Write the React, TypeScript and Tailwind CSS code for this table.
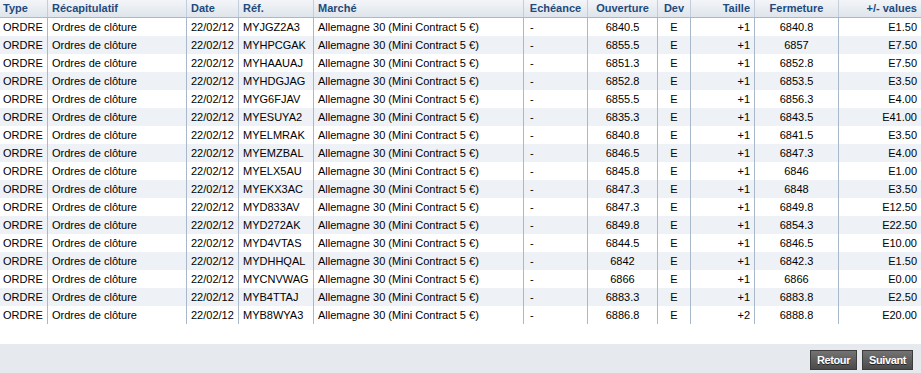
import React from 'react';

interface Trade {
  ref: string;
  open: string;
  size: string;
  close: string;
  pnl: string;
}

const trades: Trade[] = [
  { ref: 'MYJGZ2A3', open: '6840.5', size: '+1', close: '6840.8', pnl: 'E1.50' },
  { ref: 'MYHPCGAK', open: '6855.5', size: '+1', close: '6857', pnl: 'E7.50' },
  { ref: 'MYHAAUAJ', open: '6851.3', size: '+1', close: '6852.8', pnl: 'E7.50' },
  { ref: 'MYHDGJAG', open: '6852.8', size: '+1', close: '6853.5', pnl: 'E3.50' },
  { ref: 'MYG6FJAV', open: '6855.5', size: '+1', close: '6856.3', pnl: 'E4.00' },
  { ref: 'MYESUYA2', open: '6835.3', size: '+1', close: '6843.5', pnl: 'E41.00' },
  { ref: 'MYELMRAK', open: '6840.8', size: '+1', close: '6841.5', pnl: 'E3.50' },
  { ref: 'MYEMZBAL', open: '6846.5', size: '+1', close: '6847.3', pnl: 'E4.00' },
  { ref: 'MYELX5AU', open: '6845.8', size: '+1', close: '6846', pnl: 'E1.00' },
  { ref: 'MYEKX3AC', open: '6847.3', size: '+1', close: '6848', pnl: 'E3.50' },
  { ref: 'MYD833AV', open: '6847.3', size: '+1', close: '6849.8', pnl: 'E12.50' },
  { ref: 'MYD272AK', open: '6849.8', size: '+1', close: '6854.3', pnl: 'E22.50' },
  { ref: 'MYD4VTAS', open: '6844.5', size: '+1', close: '6846.5', pnl: 'E10.00' },
  { ref: 'MYDHHQAL', open: '6842', size: '+1', close: '6842.3', pnl: 'E1.50' },
  { ref: 'MYCNVWAG', open: '6866', size: '+1', close: '6866', pnl: 'E0.00' },
  { ref: 'MYB4TTAJ', open: '6883.3', size: '+1', close: '6883.8', pnl: 'E2.50' },
  { ref: 'MYB8WYA3', open: '6886.8', size: '+2', close: '6888.8', pnl: 'E20.00' },
];

const cols =
  'grid grid-cols-[47px_139px_52px_75px_210px_64px_70px_33px_64px_84px_1fr]';

const cell = 'border-l border-[#a9b9ca] px-1 whitespace-nowrap overflow-hidden';

const headers: { label: string; align: string }[] = [
  { label: 'Type', align: 'text-left' },
  { label: 'Récapitulatif', align: 'text-left' },
  { label: 'Date', align: 'text-left' },
  { label: 'Réf.', align: 'text-left' },
  { label: 'Marché', align: 'text-left' },
  { label: 'Echéance', align: 'text-center' },
  { label: 'Ouverture', align: 'text-center' },
  { label: 'Dev', align: 'text-center' },
  { label: 'Taille', align: 'text-right' },
  { label: 'Fermeture', align: 'text-center' },
  { label: '+/- values', align: 'text-right' },
];

const Button: React.FC<{ label: string }> = ({ label }) => (
  <button className="h-[20px] px-[6px] border border-[#3c3c3c] bg-gradient-to-b from-[#737373] to-[#4b4b4b] text-white font-bold text-[11px] tracking-[-0.4px] leading-[18px] [text-shadow:0_1px_0_#222]">
    {label}
  </button>
);

export default function App() {
  return (
    <div className="w-[921px] h-[373px] bg-white text-[11px] text-black font-['Liberation_Sans',Arial,sans-serif] overflow-hidden">
      <div className={`${cols} h-[18px] leading-[17px] border-b border-[#a9b9ca] bg-gradient-to-b from-[#f3f5f8] to-[#dfe5ec] font-bold text-[#1f4a7c]`}>
        {headers.map((h, i) => (
          <div
            key={h.label}
            className={`${i === 0 ? 'px-1 pl-[3px]' : 'border-l border-[#c3cedb] px-1'} ${h.align} whitespace-nowrap`}
          >
            {h.label}
          </div>
        ))}
      </div>

      {trades.map((t, i) => (
        <div
          key={t.ref}
          className={`${cols} h-[18px] leading-[18px] ${i % 2 === 1 ? 'bg-[#eef1f5]' : 'bg-white'}`}
        >
          <div className="pl-[3px] pr-1">ORDRE</div>
          <div className={cell}>Ordres de clôture</div>
          <div className={cell}>22/02/12</div>
          <div className={cell}>{t.ref}</div>
          <div className={cell}>Allemagne 30 (Mini Contract 5 €)</div>
          <div className={`${cell} pl-[6px]`}>-</div>
          <div className={`${cell} text-center`}>{t.open}</div>
          <div className={`${cell} text-center`}>E</div>
          <div className={`${cell} text-right`}>{t.size}</div>
          <div className={`${cell} text-center`}>{t.close}</div>
          <div className={`${cell} text-right`}>{t.pnl}</div>
        </div>
      ))}

      <div className="h-[20px]" />

      <div className="h-[29px] bg-[#e6eaef] flex justify-end items-start gap-[5px] pt-[6px] pr-[8px]">
        <Button label="Retour" />
        <Button label="Suivant" />
      </div>
    </div>
  );
}
